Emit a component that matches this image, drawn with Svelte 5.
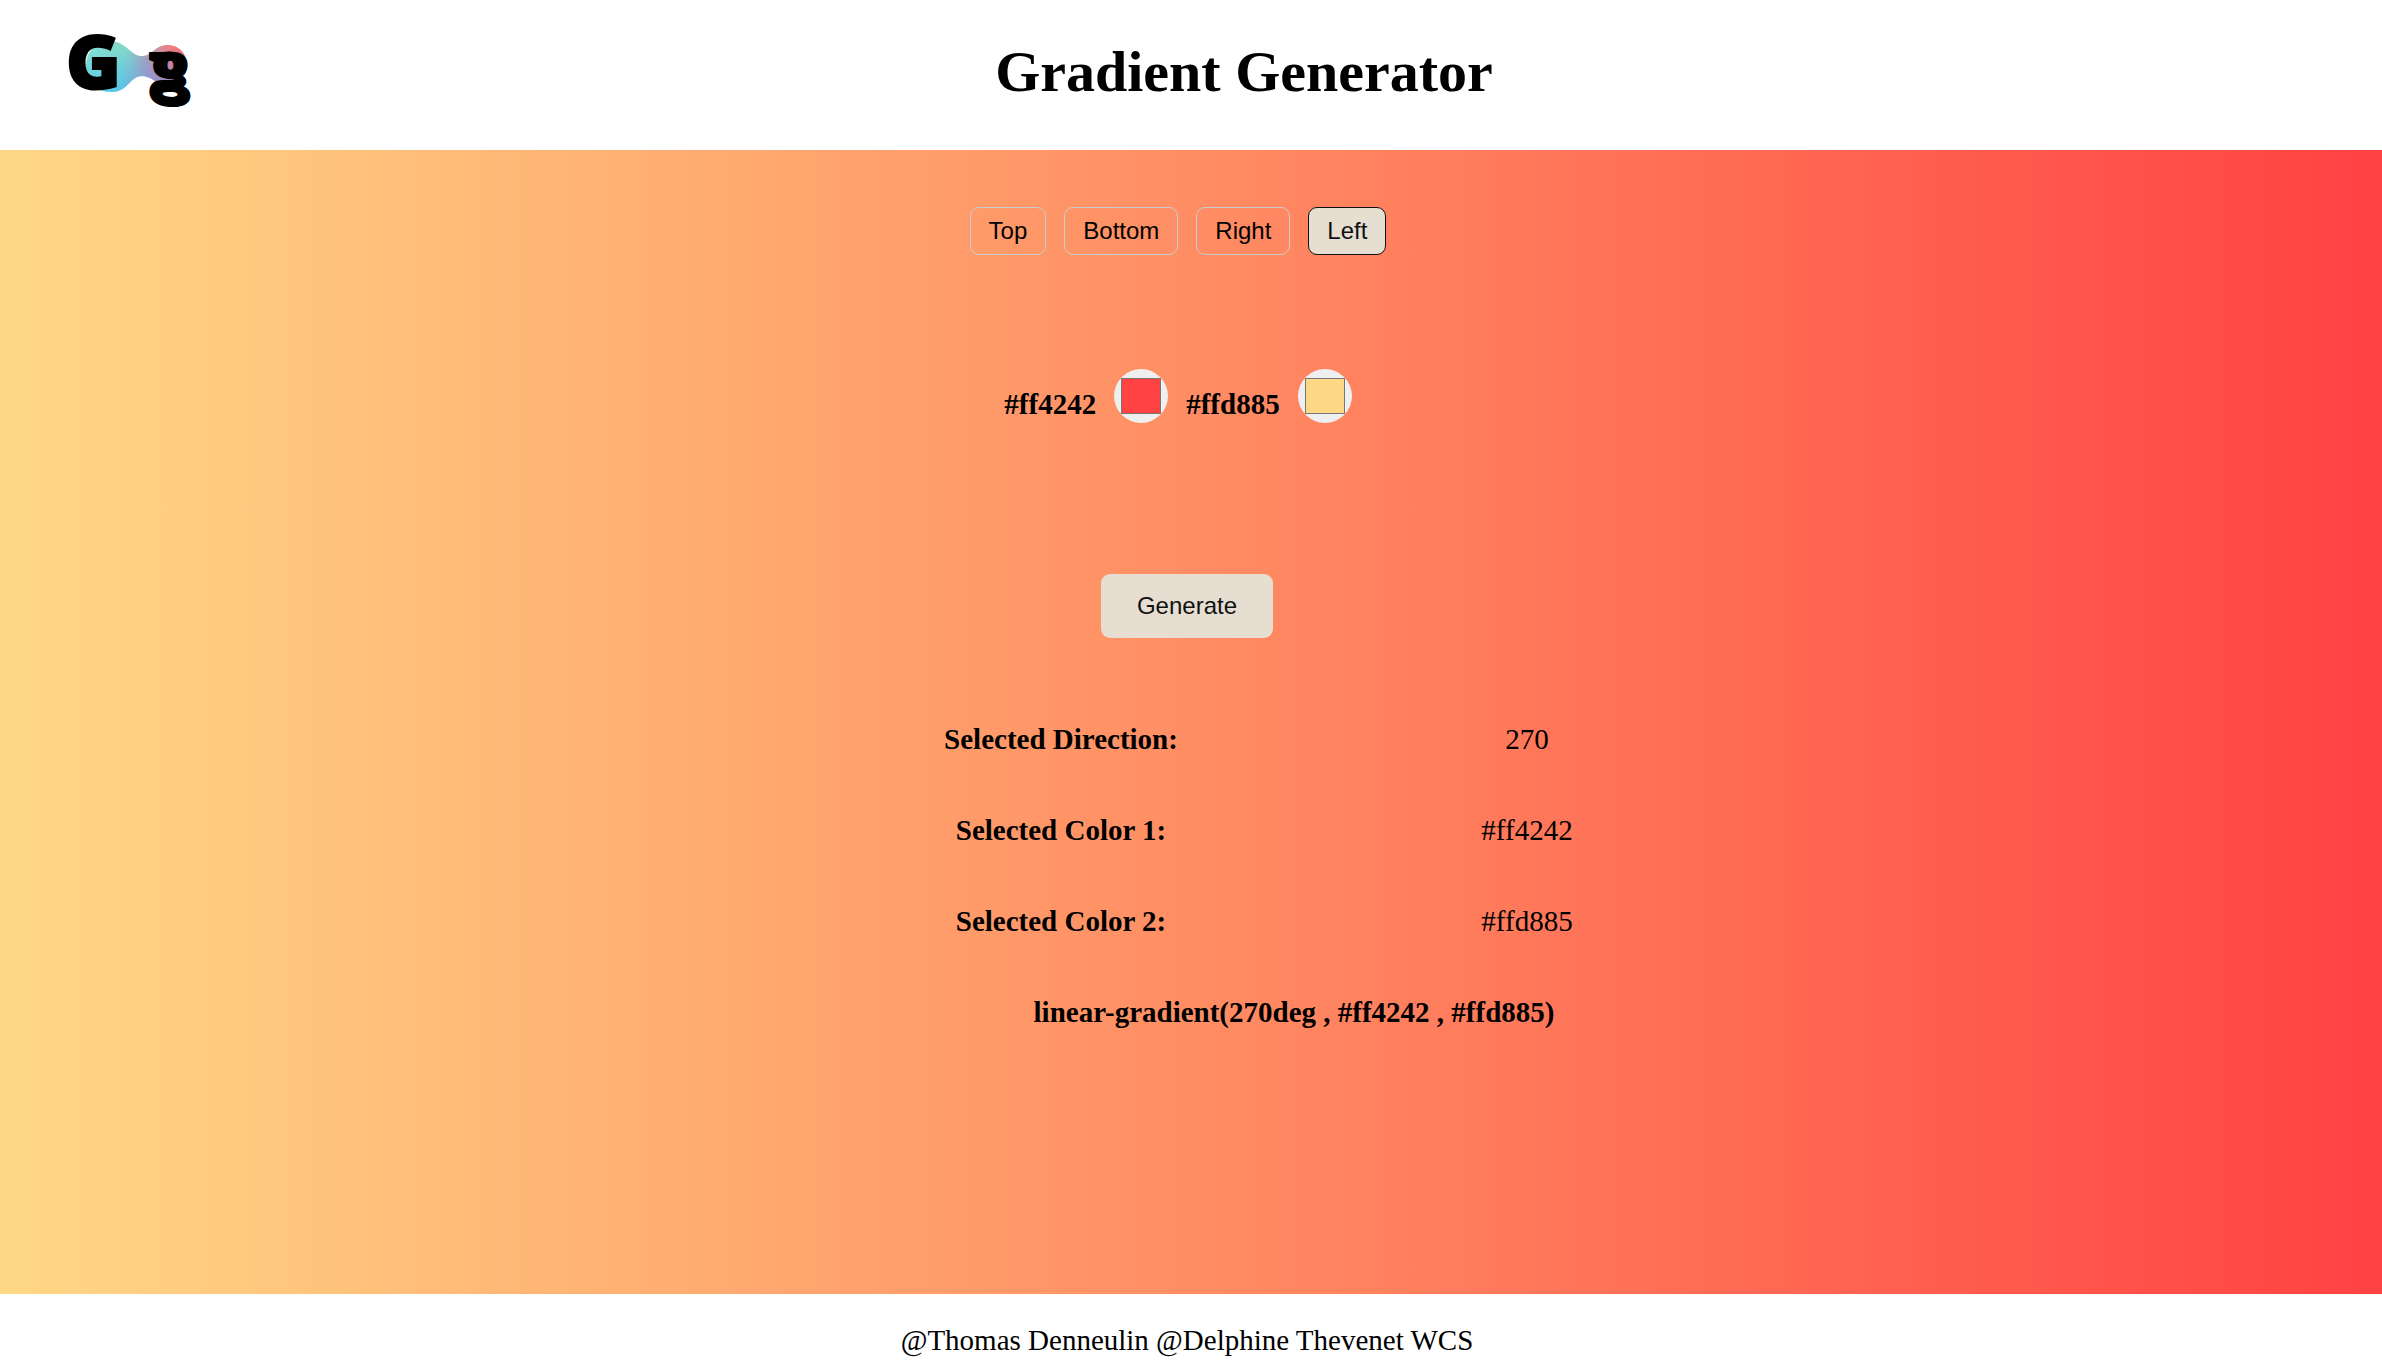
<script>
  const directions = [
    { label: 'Top', deg: 0 },
    { label: 'Bottom', deg: 180 },
    { label: 'Right', deg: 90 },
    { label: 'Left', deg: 270 }
  ];
  let deg = $state(270);
  let color1 = $state('#ff4242');
  let color2 = $state('#ffd885');
  let applied = $state({ deg: 270, color1: '#ff4242', color2: '#ffd885' });

  const gradient = $derived(`linear-gradient(${applied.deg}deg , ${applied.color1} , ${applied.color2})`);

  function generate() {
    applied = { deg, color1, color2 };
  }
</script>

<div class="page">
  <header>
    <svg class="logo" viewBox="0 0 130 82" role="img" aria-label="Gg">
      <defs>
        <linearGradient id="upper" x1="0" y1="0" x2="1" y2="0">
          <stop offset="0" stop-color="#86e4d6" />
          <stop offset="0.4" stop-color="#84d8c6" />
          <stop offset="0.6" stop-color="#a8a4bc" />
          <stop offset="0.8" stop-color="#f08488" />
          <stop offset="1" stop-color="#ff6660" />
        </linearGradient>
        <linearGradient id="lower" x1="0" y1="0" x2="1" y2="0">
          <stop offset="0" stop-color="#62cce4" />
          <stop offset="0.35" stop-color="#5cc4e6" />
          <stop offset="0.6" stop-color="#8c98d6" />
          <stop offset="1" stop-color="#8878c8" />
        </linearGradient>
        <linearGradient id="fade" x1="0" y1="10" x2="0" y2="56" gradientUnits="userSpaceOnUse">
          <stop offset="0.1" stop-color="#000" />
          <stop offset="1" stop-color="#fff" />
        </linearGradient>
        <mask id="fadeMask">
          <rect width="130" height="82" fill="url(#fade)" />
        </mask>
      </defs>
      <path d="M42 10C60 9 64 25 76 25C87 25 88 14 102 14C113 14 121 23 121 34C121 45 112 54 101 54C90 54 86 45 76 45C64 45 62 61 46 61C30 61 20 50 20 36C20 21 29 11 42 10Z" fill="url(#upper)" />
      <path d="M42 10C60 9 64 25 76 25C87 25 88 14 102 14C113 14 121 23 121 34C121 45 112 54 101 54C90 54 86 45 76 45C64 45 62 61 46 61C30 61 20 50 20 36C20 21 29 11 42 10Z" fill="url(#lower)" mask="url(#fadeMask)" />
      <text x="0" y="58" font-size="74">G</text>
      <text class="flip" x="-124" y="59" font-size="68">g</text>
    </svg>
    <h1>Gradient Generator</h1>
  </header>

  <main style:background={gradient}>
    <div class="directions">
      {#each directions as d}
        <button type="button" class="direction" class:active={deg === d.deg} aria-pressed={deg === d.deg} onclick={() => (deg = d.deg)}>{d.label}</button>
      {/each}
    </div>

    <div class="colors">
      <label for="color1">{color1}</label>
      <input id="color1" type="color" bind:value={color1} />
      <label for="color2">{color2}</label>
      <input id="color2" type="color" bind:value={color2} />
    </div>

    <button type="button" class="generate" onclick={generate}>Generate</button>

    <dl>
      <dt>Selected Direction:</dt>
      <dd>{applied.deg}</dd>
      <dt>Selected Color 1:</dt>
      <dd>{applied.color1}</dd>
      <dt>Selected Color 2:</dt>
      <dd>{applied.color2}</dd>
    </dl>
    <p class="code">{gradient}</p>
  </main>

  <footer>@Thomas Denneulin @Delphine Thevenet WCS</footer>
</div>

<style>
  :global(body) {
    margin: 0;
    background: #fff;
  }
  .page {
    min-height: 100vh;
    display: flex;
    flex-direction: column;
    font-family: 'Liberation Serif', 'Times New Roman', serif;
    font-size: 29px;
    line-height: 33px;
    color: #000;
  }
  header {
    display: flex;
    align-items: center;
    padding: 31px 0 37px 66px;
  }
  .logo {
    width: 130px;
    height: 82px;
    overflow: visible;
    flex: none;
  }
  .logo text {
    font-family: 'Open Sans', sans-serif;
    font-weight: 800;
    fill: #000;
    stroke: #000;
    stroke-width: 2px;
  }
  .flip {
    transform: scaleX(-1);
  }
  h1 {
    flex: 1;
    margin: 0;
    padding-right: 90px;
    text-align: center;
    font-size: 58px;
    line-height: 66px;
  }
  main {
    flex: 1;
    box-sizing: border-box;
    padding: 57px 0;
    display: flex;
    flex-direction: column;
    align-items: center;
  }
  button {
    font-family: 'Liberation Sans', Arial, sans-serif;
    font-size: 24px;
    line-height: 28px;
    border-radius: 9px;
    cursor: pointer;
  }
  .directions {
    display: flex;
    gap: 18px;
    padding-right: 26px;
  }
  .direction {
    padding: 9px 18px;
    border: 1px solid #ccc;
    background: transparent;
    color: #000;
  }
  .direction.active {
    background: #e6ded0;
    border-color: #111;
    color: #111;
  }
  .colors {
    display: flex;
    align-items: center;
    gap: 18px;
    margin-top: 114px;
    padding-right: 26px;
    font-weight: 700;
  }
  .colors label {
    padding-top: 17px;
  }
  input[type='color'] {
    appearance: none;
    width: 54px;
    height: 54px;
    box-sizing: border-box;
    margin: 0;
    padding: 9px 7px;
    border: 0;
    border-radius: 50%;
    background: #efefef;
    cursor: pointer;
  }
  input[type='color']::-webkit-color-swatch-wrapper {
    padding: 0;
  }
  input[type='color']::-webkit-color-swatch {
    border: 1px solid #777;
    border-radius: 0;
  }
  .generate {
    margin: 151px 8px 0 0;
    padding: 18px 36px;
    border: 0;
    background: #e6ded0;
    color: #111;
  }
  dl,
  .code {
    width: 932px;
    max-width: 80%;
    margin: 0 0 0 206px;
    text-align: center;
  }
  dl {
    display: grid;
    grid-template-columns: 1fr 1fr;
    row-gap: 58px;
    margin-top: 85px;
  }
  dt,
  .code {
    font-weight: 700;
  }
  dd {
    margin: 0;
  }
  .code {
    margin-top: 58px;
  }
  footer {
    padding: 30px 8px 9px 0;
    text-align: center;
  }
</style>
